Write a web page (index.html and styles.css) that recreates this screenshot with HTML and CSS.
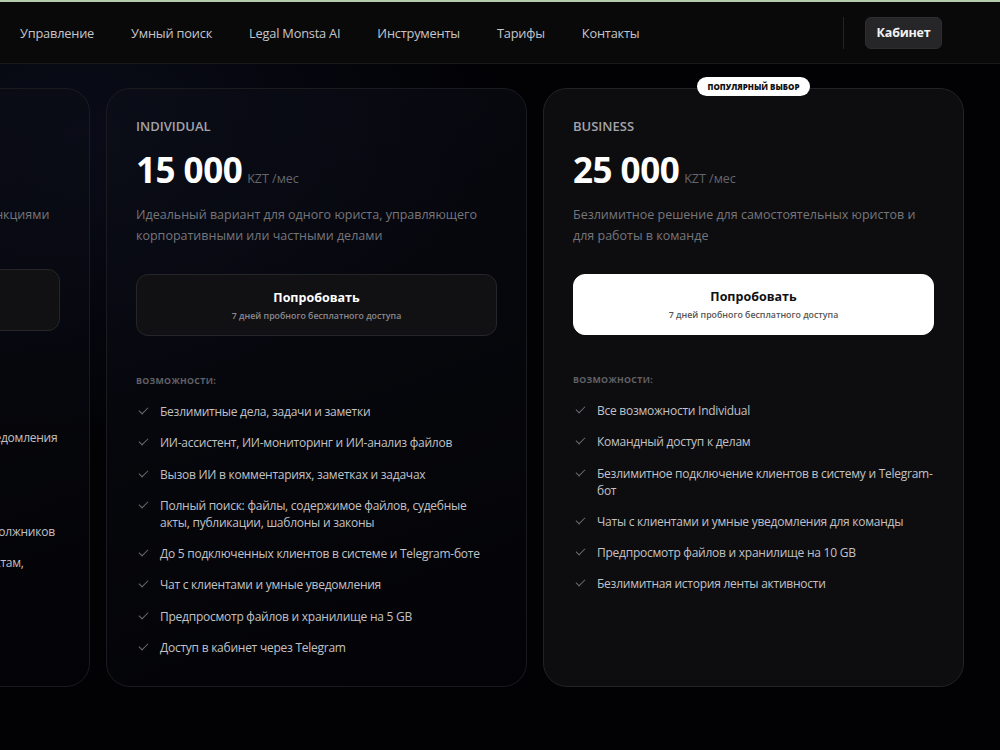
FILE: index.html
```html
<!DOCTYPE html>
<html lang="ru">
<head>
    <meta charset="UTF-8">
    <meta name="viewport" content="width=device-width, initial-scale=1.0">
    <title>Тарифы — Legal Monsta</title>
    <link rel="stylesheet" href="styles.css">
</head>
<body>

    <!-- Шапка с навигацией -->
    <header class="topbar">
        <nav class="menu">
            <a href="#">Управление</a>
            <a href="#">Умный поиск</a>
            <a href="#">Legal Monsta AI</a>
            <a href="#">Инструменты</a>
            <a href="#">Тарифы</a>
            <a href="#">Контакты</a>
        </nav>
        <div class="topbar-right">
            <span class="divider"></span>
            <a href="#" class="cabinet-btn">Кабинет</a>
        </div>
    </header>

    <!-- Карусель тарифов -->
    <main class="plans">
        <div class="plans-track">

            <div class="plan plan--free">
                <div class="plan-name">FREE</div>
                <div class="plan-price"><span class="amount">0</span><span class="unit">KZT /мес</span></div>
                <p class="plan-desc">Базовый доступ для знакомства с основными функциями платформы</p>
                <a href="#" class="try-btn">
                    <strong>Попробовать</strong>
                    <small>Без ограничений по времени</small>
                </a>
                <div class="features-title">Возможности:</div>
                <ul class="features">
                    <li>До 10 дел и задач</li>
                    <li>Календарь заседаний, сроки, напоминания и уведомления</li>
                    <li>Базовый поиск по делам</li>
                    <li>Шаблоны документов</li>
                    <li>Быстрая проверка контрагентов и мониторинг должников</li>
                    <li>Поиск по законам, судебным решениям и контактам, шаблонам и публикациям</li>
                    <li>Хранилище на 1 GB</li>
                    <li>Поддержка по почте</li>
                </ul>
            </div>

            <div class="plan">
                <div class="plan-name">INDIVIDUAL</div>
                <div class="plan-price"><span class="amount">15 000</span><span class="unit">KZT /мес</span></div>
                <p class="plan-desc">Идеальный вариант для одного юриста, управляющего корпоративными или частными делами</p>
                <a href="#" class="try-btn">
                    <strong>Попробовать</strong>
                    <small>7 дней пробного бесплатного доступа</small>
                </a>
                <div class="features-title">Возможности:</div>
                <ul class="features">
                    <li>Безлимитные дела, задачи и заметки</li>
                    <li>ИИ-ассистент, ИИ-мониторинг и ИИ-анализ файлов</li>
                    <li>Вызов ИИ в комментариях, заметках и задачах</li>
                    <li>Полный поиск: файлы, содержимое файлов, судебные акты, публикации, шаблоны и законы</li>
                    <li>До 5 подключенных клиентов в системе и Telegram-боте</li>
                    <li>Чат с клиентами и умные уведомления</li>
                    <li>Предпросмотр файлов и хранилище на 5 GB</li>
                    <li>Доступ в кабинет через Telegram</li>
                </ul>
            </div>

            <div class="plan plan--popular">
                <span class="badge">Популярный выбор</span>
                <div class="plan-name">BUSINESS</div>
                <div class="plan-price"><span class="amount">25 000</span><span class="unit">KZT /мес</span></div>
                <p class="plan-desc">Безлимитное решение для самостоятельных юристов и для работы в команде</p>
                <a href="#" class="try-btn try-btn--light">
                    <strong>Попробовать</strong>
                    <small>7 дней пробного бесплатного доступа</small>
                </a>
                <div class="features-title">Возможности:</div>
                <ul class="features">
                    <li>Все возможности Individual</li>
                    <li>Командный доступ к делам</li>
                    <li>Безлимитное подключение клиентов в систему и Telegram-бот</li>
                    <li>Чаты с клиентами и умные уведомления для команды</li>
                    <li>Предпросмотр файлов и хранилище на 10 GB</li>
                    <li>Безлимитная история ленты активности</li>
                </ul>
            </div>

        </div>
    </main>

</body>
</html>
```

FILE: styles.css
```css
body {
    margin: 0;
    padding: 0;
    height: 100vh;
    overflow: hidden;
    font-family: 'Open Sans', 'Noto Sans', sans-serif;
    color: #fff;
    background-color: #020205;
    background-image: radial-gradient(ellipse 600px 450px at 8% 18%, rgba(22, 30, 60, 0.35), transparent 70%);
}

a {
    color: inherit;
    text-decoration: none;
}

/* Шапка */
.topbar {
    height: 61px;
    border-top: 2px solid #b4cbae;
    border-bottom: 1px solid #19191b;
    background-color: #09090a;
    display: flex;
    align-items: center;
    justify-content: space-between;
    padding: 0 58px 0 20px;
}

.menu {
    display: flex;
    gap: 37px;
}

.menu a {
    font-size: 12.8px;
    letter-spacing: -0.2px;
    color: #c6c6ca;
}

.topbar-right {
    display: flex;
    align-items: center;
}

.divider {
    width: 1px;
    height: 32px;
    background-color: #242426;
    margin-right: 21px;
}

.cabinet-btn {
    background-color: #262628;
    border: 1px solid #2e2e30;
    border-radius: 6px;
    padding: 6px 10.5px 7px;
    font-size: 12.5px;
    font-weight: 700;
    letter-spacing: -0.2px;
    color: #f2f2f2;
}

/* Тарифы */
.plans {
    padding-top: 24px;
}

.plans-track {
    display: flex;
    gap: 16px;
    margin-left: -331px;
}

.plan {
    position: relative;
    flex: 0 0 421px;
    height: 599px;
    box-sizing: border-box;
    padding: 27px 29px 0;
    border: 1px solid #1b1b1f;
    border-radius: 24px;
    background: linear-gradient(160deg, rgba(12, 14, 24, 0.6), rgba(5, 5, 9, 0.4));
}

.plan--popular {
    background: #0d0d0f;
    border-color: #232326;
}

.badge {
    position: absolute;
    top: -12px;
    left: 50%;
    transform: translateX(-50%);
    background-color: #fff;
    color: #111;
    font-size: 8px;
    font-weight: 800;
    text-transform: uppercase;
    padding: 5px 11px 4px;
    border-radius: 10px;
    white-space: nowrap;
    line-height: 10px;
}

.plan-name {
    font-size: 13px;
    font-weight: 600;
    color: #a3a3aa;
    line-height: 20px;
}

.plan-price {
    margin-top: 12px;
    display: flex;
    align-items: baseline;
}

.amount {
    font-size: 35px;
    font-weight: 700;
    letter-spacing: -0.5px;
    line-height: 44px;
    color: #fff;
}

.unit {
    font-size: 12.5px;
    color: #66666c;
    margin-left: 5px;
}

.plan-desc {
    margin: 12px 0 28px;
    font-size: 12.5px;
    line-height: 21px;
    color: #76767c;
}

.plan--free .plan-desc {
    margin-bottom: 23px;
}

.try-btn {
    display: flex;
    flex-direction: column;
    align-items: center;
    justify-content: center;
    height: 62px;
    box-sizing: border-box;
    border: 1px solid #26262a;
    border-radius: 12px;
    background-color: #111113;
}

.try-btn strong {
    font-size: 12.5px;
    color: #fff;
    line-height: 18px;
}

.try-btn small {
    font-size: 8.8px;
    font-weight: 600;
    color: #8a8a90;
    margin-top: 3px;
}

.try-btn--light {
    background-color: #fff;
    border-color: #fff;
    height: 61px;
}

.try-btn--light strong {
    color: #111;
}

.try-btn--light small {
    color: #555;
}

.features-title {
    margin-top: 39px;
    font-size: 8.8px;
    font-weight: 700;
    text-transform: uppercase;
    letter-spacing: 0.3px;
    color: #616167;
}

.features {
    list-style: none;
    margin: 16px 0 0;
    padding: 0;
}

.features li {
    position: relative;
    padding-left: 24px;
    font-size: 12px;
    letter-spacing: -0.25px;
    line-height: 17px;
    color: #c2c2c6;
    margin-bottom: 14.3px;
}

/* галочка перед пунктом */
.features li::before {
    content: "";
    position: absolute;
    left: 3px;
    top: 4px;
    width: 8px;
    height: 4px;
    border-left: 1px solid #6c6c72;
    border-bottom: 1px solid #6c6c72;
    transform: rotate(-45deg);
}
```
